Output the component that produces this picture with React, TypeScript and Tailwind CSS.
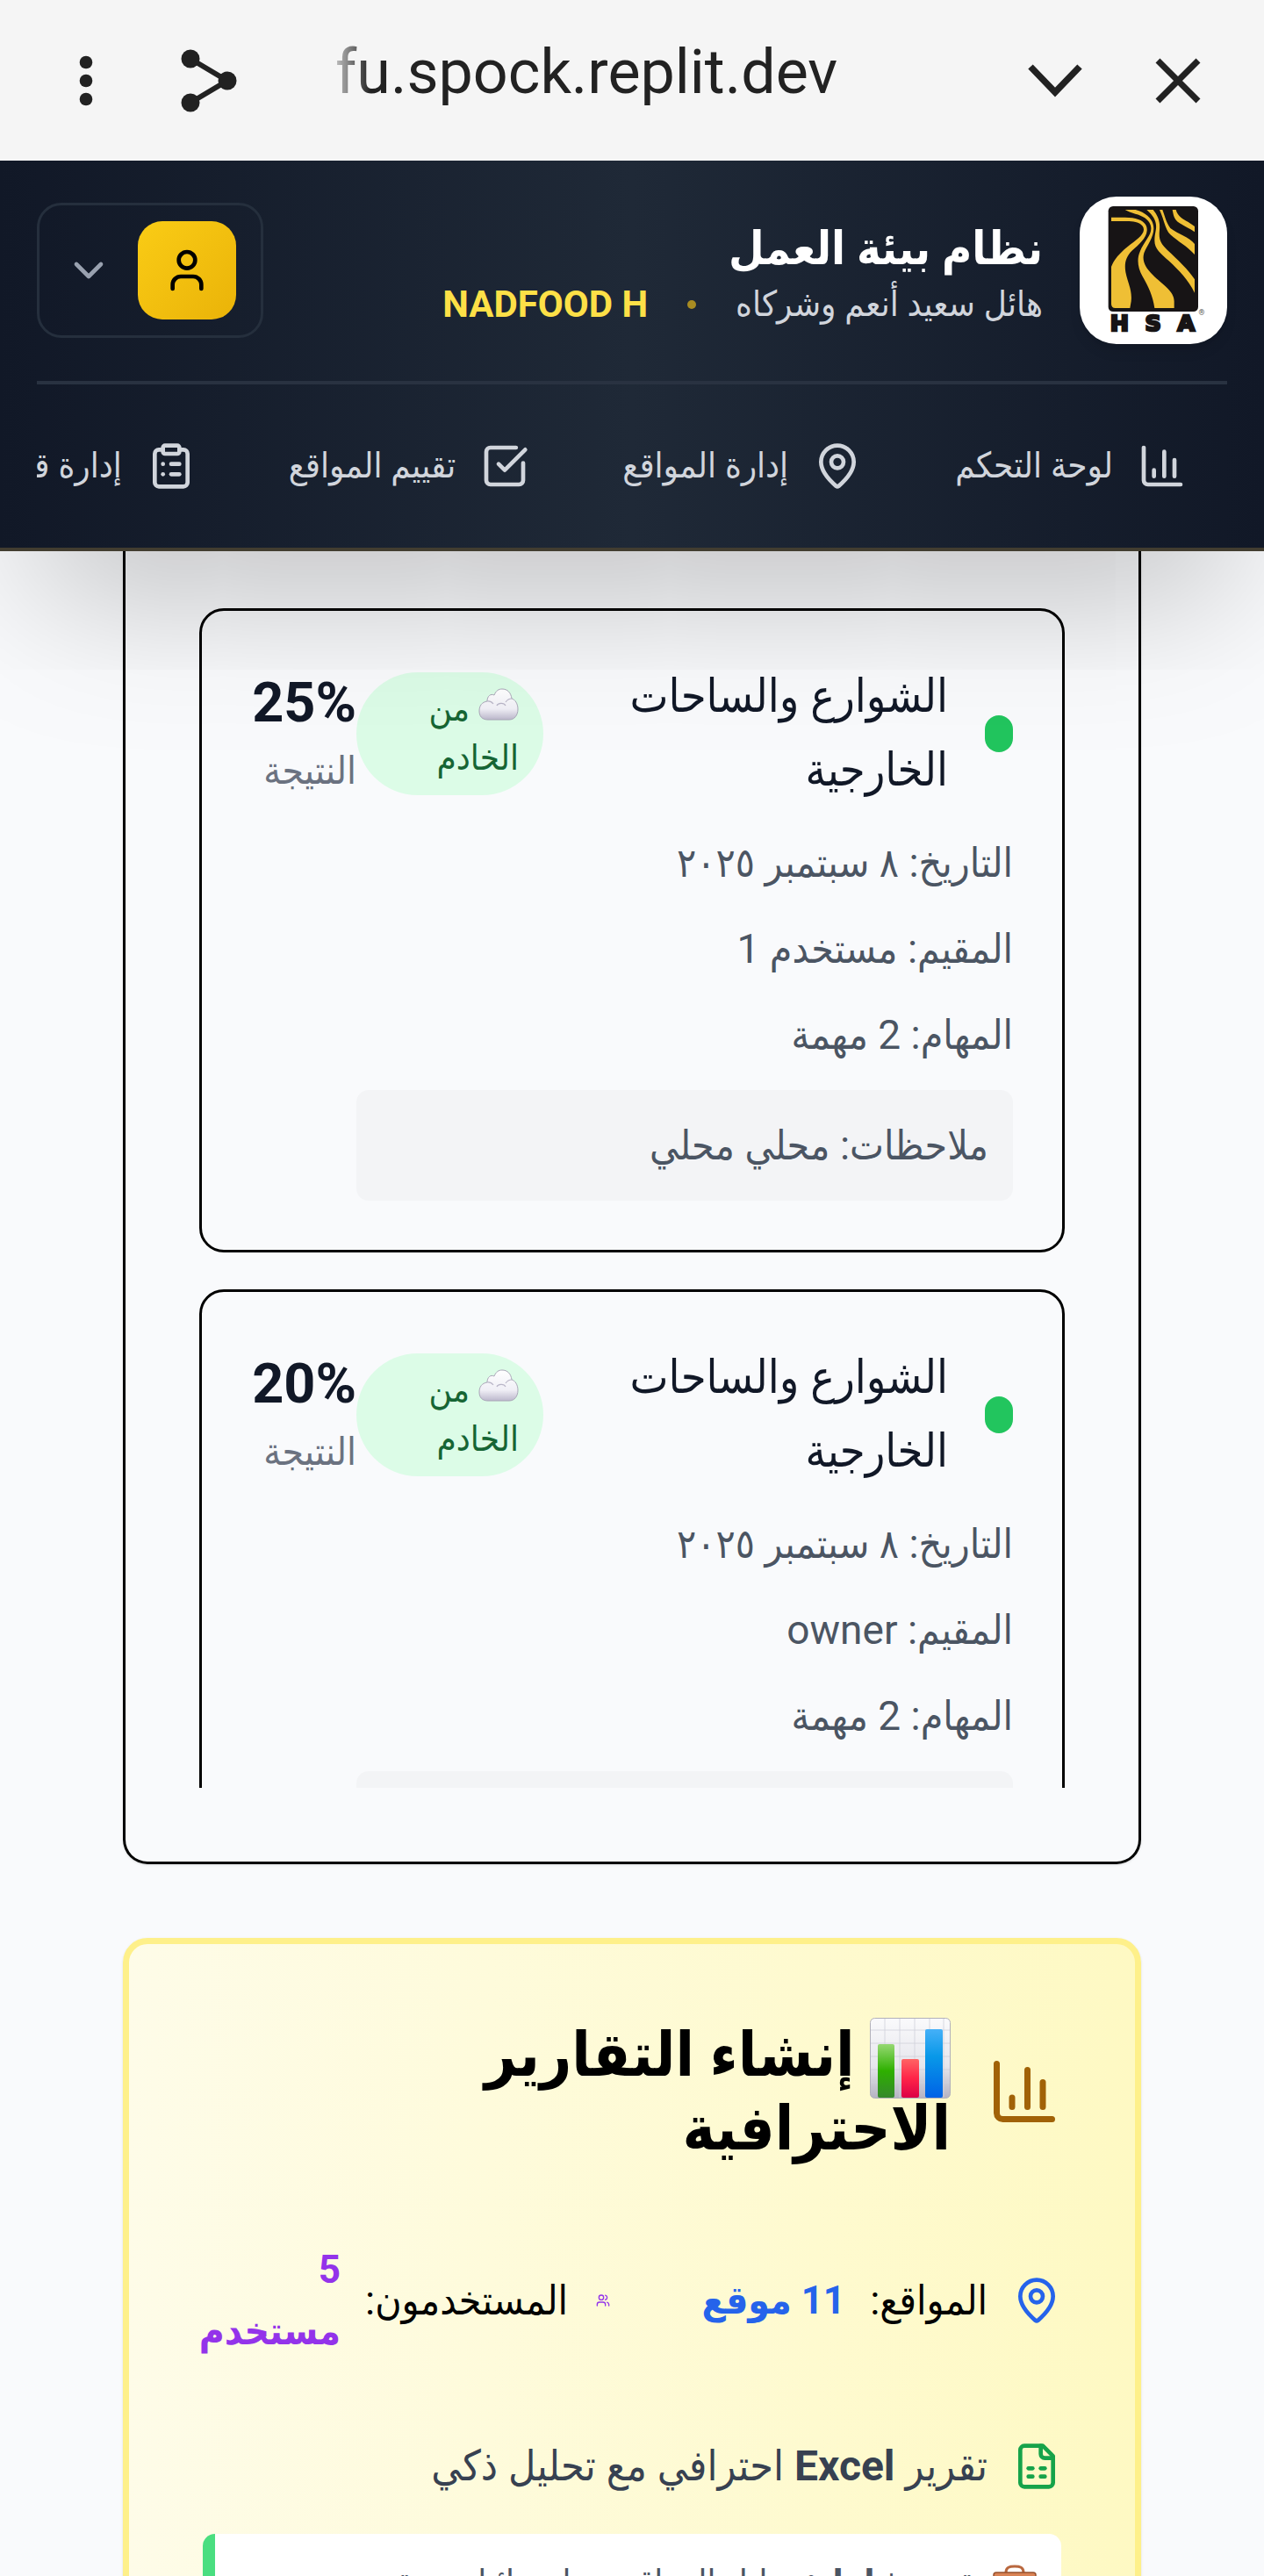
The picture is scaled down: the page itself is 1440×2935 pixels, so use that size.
import type { ReactNode } from "react";

function ChartIcon({ className }: { className: string }) {
  return (
    <svg viewBox="0 0 24 24" fill="none" stroke="currentColor" strokeWidth="2" strokeLinecap="round" strokeLinejoin="round" className={className} aria-hidden="true">
      <path d="M3 3v16a2 2 0 0 0 2 2h16" />
      <path d="M18 17V9" />
      <path d="M13 17V5" />
      <path d="M8 17v-3" />
    </svg>
  );
}

function PinIcon({ className }: { className: string }) {
  return (
    <svg viewBox="0 0 24 24" fill="none" stroke="currentColor" strokeWidth="2" strokeLinecap="round" strokeLinejoin="round" className={className} aria-hidden="true">
      <path d="M20 10c0 4.993-5.539 10.193-7.399 11.799a1 1 0 0 1-1.202 0C9.539 20.193 4 14.993 4 10a8 8 0 0 1 16 0" />
      <circle cx="12" cy="10" r="3" />
    </svg>
  );
}

function CheckIcon({ className }: { className: string }) {
  return (
    <svg viewBox="0 0 24 24" fill="none" stroke="currentColor" strokeWidth="2" strokeLinecap="round" strokeLinejoin="round" className={className} aria-hidden="true">
      <path d="M21 10.5V19a2 2 0 0 1-2 2H5a2 2 0 0 1-2-2V5a2 2 0 0 1 2-2h12.5" />
      <path d="m9 11 3 3L22 4" />
    </svg>
  );
}

function ClipboardIcon({ className }: { className: string }) {
  return (
    <svg viewBox="0 0 24 24" fill="none" stroke="currentColor" strokeWidth="2" strokeLinecap="round" strokeLinejoin="round" className={className} aria-hidden="true">
      <rect width="8" height="4" x="8" y="2" rx="1" ry="1" />
      <path d="M16 4h2a2 2 0 0 1 2 2v14a2 2 0 0 1-2 2H6a2 2 0 0 1-2-2V6a2 2 0 0 1 2-2h2" />
      <path d="M12 11h4" />
      <path d="M12 16h4" />
      <path d="M8 11h.01" />
      <path d="M8 16h.01" />
    </svg>
  );
}

function UserIcon({ className }: { className: string }) {
  return (
    <svg viewBox="0 0 24 24" fill="none" stroke="currentColor" strokeWidth="2" strokeLinecap="round" strokeLinejoin="round" className={className} aria-hidden="true">
      <path d="M19 21v-2a4 4 0 0 0-4-4H9a4 4 0 0 0-4 4v2" />
      <circle cx="12" cy="7" r="4" />
    </svg>
  );
}

function UsersIcon({ className }: { className: string }) {
  return (
    <svg viewBox="0 0 24 24" fill="none" stroke="currentColor" strokeWidth="2" strokeLinecap="round" strokeLinejoin="round" className={className} aria-hidden="true">
      <path d="M16 21v-2a4 4 0 0 0-4-4H6a4 4 0 0 0-4 4v2" />
      <circle cx="9" cy="7" r="4" />
      <path d="M22 21v-2a4 4 0 0 0-3-3.87" />
      <path d="M16 3.13a4 4 0 0 1 0 7.75" />
    </svg>
  );
}

function SheetIcon({ className }: { className: string }) {
  return (
    <svg viewBox="0 0 24 24" fill="none" stroke="currentColor" strokeWidth="2" strokeLinecap="round" strokeLinejoin="round" className={className} aria-hidden="true">
      <path d="M15 2H6a2 2 0 0 0-2 2v16a2 2 0 0 0 2 2h12a2 2 0 0 0 2-2V7Z" />
      <path d="M14 2v4a2 2 0 0 0 2 2h4" />
      <path d="M8 13h2" />
      <path d="M14 13h2" />
      <path d="M8 17h2" />
      <path d="M14 17h2" />
    </svg>
  );
}

function Logo() {
  return (
    <svg viewBox="60 42 504 504" className="size-full" role="img" aria-label="HSA">
      <rect x="158" y="75" width="307" height="360" rx="16" fill="#171415" />
      <g fill="#efbf35">
        <path d="M168 113H215C265 113 292 130 290 158C288 185 262 205 240 226C218 247 212 270 217 300C225 340 240 360 236 400L232 423H182Q168 423 168 409V282C178 255 200 232 225 212C250 192 278 175 279 155C279 135 255 125 215 126H168Z" />
        <path d="M215 87H251C290 98 312 120 313 150C314 180 290 210 280 235C272 262 285 285 310 310C345 345 383 365 383 400V423H316C310 380 295 350 275 315C258 285 255 255 266 230C280 195 305 175 304 150C303 125 280 108 250 101C235 97 225 92 215 87Z" />
        <path d="M289 87H311C330 110 335 130 333 155C330 190 335 200 360 225C395 258 430 290 453 325V371C430 325 400 295 365 262C335 235 315 220 316 190C317 160 326 150 318 125C312 108 300 98 289 87Z" />
        <path d="M333 87H343C352 110 355 130 370 150C395 170 435 180 453 204V240C425 210 395 195 370 172C352 155 350 125 333 87Z" />
        <path d="M377 87H389C395 110 415 120 430 128L453 144V163C435 150 415 142 395 128C380 115 380 100 377 87Z" />
      </g>
      <g fill="#171415" stroke="#171415" strokeWidth="8" fontFamily="DejaVu Sans" fontWeight="bold" fontSize="76" textAnchor="middle">
        <text x="196" y="501">H</text>
        <text x="311" y="501">S</text>
        <text x="424" y="501">A</text>
      </g>
      <text x="477" y="446" fontFamily="Roboto" fontSize="26" textAnchor="middle" fill="#555">®</text>
    </svg>
  );
}

function CloudEmoji() {
  return (
    <svg viewBox="0 0 46 37" className="inline-block h-[37px] w-[46px] align-baseline" role="img" aria-label="☁️">
      <defs>
        <linearGradient id="cloud" x1="0" y1="0" x2="0" y2="1">
          <stop offset="0" stopColor="#ffffff" />
          <stop offset="0.65" stopColor="#f0eff6" />
          <stop offset="1" stopColor="#bcb8cc" />
        </linearGradient>
      </defs>
      <path d="M11 36C4 36 1 32 1 26C1 20 4 16 10 15C10 9 14 6 18 8C20 3 23 1 27 1C33 1 37 5 38 12C42 13 45 18 45 24C45 31 41 36 35 36Z" fill="url(#cloud)" stroke="#aaa6b8" strokeWidth="1" />
      <path d="M10 15c3-.5 5 .5 7 3M21 20c1-3 8-4 10 0M31 16c2-3 4-4 7-4" fill="none" stroke="#b9b6c8" strokeWidth="1.200" />
    </svg>
  );
}

function BarsEmoji() {
  return (
    <svg viewBox="0 0 92 92" className="-my-5 inline-block size-[92px] align-[-6px]" role="img" aria-label="📊">
      <defs>
        <linearGradient id="sheet" x1="0" y1="0" x2="0" y2="1">
          <stop offset="0" stopColor="#fafafc" />
          <stop offset="0.6" stopColor="#e6e6ec" />
          <stop offset="1" stopColor="#b5b3c2" />
        </linearGradient>
        <linearGradient id="green" x1="0" y1="0" x2="0" y2="1">
          <stop offset="0" stopColor="#96d872" />
          <stop offset="0.5" stopColor="#2eb000" />
          <stop offset="1" stopColor="#35882c" />
        </linearGradient>
        <linearGradient id="red" x1="0" y1="0" x2="0" y2="1">
          <stop offset="0" stopColor="#ff6464" />
          <stop offset="0.5" stopColor="#ff2448" />
          <stop offset="1" stopColor="#dc0046" />
        </linearGradient>
        <linearGradient id="blue" x1="0" y1="0" x2="0" y2="1">
          <stop offset="0" stopColor="#45b0f8" />
          <stop offset="0.4" stopColor="#0898e8" />
          <stop offset="1" stopColor="#0062e6" />
        </linearGradient>
      </defs>
      <rect x="0.500" y="0.500" width="91" height="91" rx="5" fill="url(#sheet)" stroke="#b2b1ba" />
      <path d="M17 1V91M34 1V91M51 1V91M68 1V91M84 1V91M1 14H91M1 29H91M1 44H91M1 59H91M1 74H91" stroke="#cfd0da" strokeWidth="0.800" />
      <rect x="9" y="30" width="19" height="61" rx="2" fill="url(#green)" />
      <rect x="36" y="47" width="20" height="44" rx="2" fill="url(#red)" />
      <rect x="63" y="13" width="20" height="78" rx="2" fill="url(#blue)" />
    </svg>
  );
}

function BriefcaseEmoji() {
  return (
    <svg viewBox="0 0 50 46" className="-my-3 inline-block h-[46px] w-[50px] align-baseline" role="img" aria-label="💼">
      <path d="M15 9C15 3 19 2 25 2S35 3 35 9" fill="none" stroke="#b9683f" strokeWidth="3" />
      <rect x="1" y="9" width="48" height="36" rx="3" fill="#d98355" stroke="#96512e" strokeWidth="1.500" />
      <path d="M1 26H49" stroke="#96512e" strokeWidth="2" />
    </svg>
  );
}

function BrowserBar() {
  return (
    <div dir="ltr" className="flex h-[183px] shrink-0 items-center bg-[#f5f5f5] px-[70px] text-[#222]">
      <button type="button" aria-label="Menu" className="flex w-14 justify-center">
        <svg viewBox="0 0 56 64" className="h-16 w-14" fill="currentColor" aria-hidden="true">
          <circle cx="28" cy="11" r="7.300" />
          <circle cx="28" cy="32" r="7.300" />
          <circle cx="28" cy="53" r="7.300" />
        </svg>
      </button>
      <button type="button" aria-label="Share" className="ml-20">
        <svg viewBox="0 0 64 72" className="h-[72px] w-16" aria-hidden="true">
          <path d="M11 11L53 36L11 61" fill="none" stroke="currentColor" strokeWidth="6" />
          <g fill="currentColor">
            <circle cx="11" cy="11" r="10.500" />
            <circle cx="53" cy="36" r="10.500" />
            <circle cx="11" cy="61" r="10.500" />
          </g>
        </svg>
      </button>
      <div className="ml-[112px] flex-1 overflow-hidden pb-5 text-[70px] leading-[84px] whitespace-nowrap [mask-image:linear-gradient(to_right,rgba(0,0,0,0.25),#000_40px)]">
        fu.spock.replit.dev
      </div>
      <button type="button" aria-label="Collapse" className="mr-20">
        <svg viewBox="0 0 64 40" className="h-10 w-16" aria-hidden="true">
          <path d="M4 4L32 33L60 4" fill="none" stroke="currentColor" strokeWidth="7.500" />
        </svg>
      </button>
      <button type="button" aria-label="Close">
        <svg viewBox="0 0 56 56" className="size-14" aria-hidden="true">
          <path d="M5 5L51 51M51 5L5 51" fill="none" stroke="currentColor" strokeWidth="7" />
        </svg>
      </button>
    </div>
  );
}

function NavItem({ icon, children }: { icon: ReactNode; children: ReactNode }) {
  return (
    <a href="#" className="flex h-[112px] shrink-0 items-center gap-7 px-[46px] text-[40px] leading-[70px] whitespace-nowrap text-gray-300">
      {icon}
      <span>{children}</span>
    </a>
  );
}

function Header() {
  return (
    <header className="relative z-10 shrink-0 border-b-4 border-[#423d30] bg-linear-to-r from-[#111827] via-[#1f2937] to-[#111827] px-[42px] pt-[41px] shadow-[0_88px_175px_-42px_rgba(0,0,0,0.25)]">
      <div className="flex items-center justify-between pb-[42px]">
        <div className="flex items-center gap-[42px]">
          <div className="size-[168px] shrink-0 overflow-hidden rounded-[42px] bg-white shadow-lg">
            <Logo />
          </div>
          <div className="pt-2">
            <h1 className="text-[52px] leading-[70px] font-bold text-white">نظام بيئة العمل</h1>
            <div className="flex items-center gap-[45px] text-[40px] leading-[56px]">
              <span className="text-gray-300">هائل سعيد أنعم وشركاه</span>
              <span className="size-[10px] rounded-full bg-[#a88c22]" />
              <span className="text-[42px] font-bold text-[#fde047]">NADFOOD H</span>
            </div>
          </div>
        </div>
        <button type="button" aria-label="User menu" className="flex items-center gap-7 rounded-[28px] border-[3px] border-[#252f3d] px-7 py-[18px]">
          <span className="flex size-[112px] items-center justify-center rounded-[28px] bg-linear-to-br from-[#facc15] to-[#eab308] text-black">
            <UserIcon className="size-14" />
          </span>
          <svg viewBox="0 0 24 24" className="size-14 text-gray-400" fill="none" stroke="currentColor" strokeWidth="2" strokeLinecap="round" strokeLinejoin="round" aria-hidden="true">
            <path d="m6 9 6 6 6-6" />
          </svg>
        </button>
      </div>
      <nav className="flex gap-[14px] overflow-hidden border-t-4 border-[#293241] py-[37px]">
        <NavItem icon={<ChartIcon className="size-14" />}>لوحة التحكم</NavItem>
        <NavItem icon={<PinIcon className="size-14" />}>إدارة المواقع</NavItem>
        <NavItem icon={<CheckIcon className="size-14" />}>تقييم المواقع</NavItem>
        <NavItem icon={<ClipboardIcon className="size-14" />}>إدارة قوائم التحقق</NavItem>
      </nav>
    </header>
  );
}

type Evaluation = { score: string; evaluator: string };

const evaluations: Evaluation[] = [
  { score: "25%", evaluator: "مستخدم 1" },
  { score: "20%", evaluator: "owner" },
];

function EvaluationCard({ score, evaluator }: Evaluation) {
  return (
    <article className="flex items-start rounded-[28px] border-[3px] border-black p-14">
      <div className="flex-1 space-y-7 text-[46px] leading-[70px] text-[#4b5563]">
        <div className="flex items-center justify-between">
          <div className="flex items-center gap-[42px]">
            <span className="h-[42px] w-8 shrink-0 rounded-full bg-[#22c55e]" />
            <h3 className="w-[390px] text-[52px] leading-[84px] text-[#111827]">الشوارع والساحات الخارجية</h3>
          </div>
          <span className="w-[213px] shrink-0 rounded-[70px] bg-[#dcfce7] px-7 py-[14px] text-[40px] leading-[56px] text-[#166534]">
            <CloudEmoji /> من الخادم
          </span>
        </div>
        <p>التاريخ: ٨ سبتمبر ٢٠٢٥</p>
        <p>المقيم: {evaluator}</p>
        <p>المهام: 2 مهمة</p>
        <p className="rounded-[14px] bg-[#f3f4f6] p-7">ملاحظات: محلي محلي</p>
      </div>
      <div className="w-[120px] shrink-0">
        <div className="text-[63px] leading-[98px] font-bold text-[#111827]">{score}</div>
        <div className="text-[44px] leading-[56px] text-[#6b7280]">النتيجة</div>
      </div>
    </article>
  );
}

function ReportsCard() {
  return (
    <section className="shrink-0 rounded-[28px] border-[7px] border-[#fef08a] bg-linear-to-l from-[#fef9c3] to-[#fefce8] p-[84px] shadow-sm">
      <div className="flex items-center gap-[42px]">
        <ChartIcon className="size-[84px] shrink-0 text-[#a16207]" />
        <h2 className="w-[640px] text-[70px] leading-[84px] font-bold text-black">
          <BarsEmoji /> إنشاء التقارير الاحترافية
        </h2>
      </div>
      <div className="mt-[84px] grid grid-cols-2 items-center gap-[42px] text-[46px] leading-[70px] text-black">
        <div className="flex items-center gap-7">
          <PinIcon className="size-14 shrink-0 text-[#2563eb]" />
          <span>المواقع:</span>
          <span className="text-[44px] font-bold text-[#2563eb]">11 موقع</span>
        </div>
        <div className="flex items-center gap-7">
          <span className="flex w-6 shrink-0 justify-center text-[#9333ea]">
            <UsersIcon className="size-4" />
          </span>
          <span>المستخدمون:</span>
          <span className="text-[44px] font-bold text-[#9333ea]">5 مستخدم</span>
        </div>
      </div>
      <div className="mt-[84px] flex items-center gap-7 text-[48px] leading-[70px] text-[#374151]">
        <SheetIcon className="size-14 shrink-0 text-[#16a34a]" />
        <p>
          تقرير <strong className="font-bold">Excel</strong> احترافي مع تحليل ذكي
        </p>
      </div>
      <p className="mt-[42px] rounded-[14px] border-l-[14px] border-[#4ade80] bg-white p-7 text-[40px] leading-[56px] text-[#4b5563]">
        <BriefcaseEmoji /> تقرير <strong>شامل:</strong> تحليل المواقع مع إحصائيات متقدمة
      </p>
    </section>
  );
}

export default function App() {
  return (
    <div dir="rtl" className="flex h-screen flex-col overflow-hidden bg-[#f9fafc] font-['Roboto','DejaVu_Sans_Condensed','DejaVu_Sans',sans-serif]">
      <BrowserBar />
      <Header />
      <main className="flex flex-1 flex-col gap-[84px] overflow-hidden px-[140px]">
        <section className="shrink-0 rounded-b-[28px] border-x-[3px] border-b-[3px] border-black px-[84px] pt-[65px] pb-[84px] shadow-sm">
          <div className="flex h-[1344px] flex-col gap-[42px] overflow-hidden">
            {evaluations.map((item) => (
              <EvaluationCard key={item.score} {...item} />
            ))}
          </div>
        </section>
        <ReportsCard />
      </main>
    </div>
  );
}
